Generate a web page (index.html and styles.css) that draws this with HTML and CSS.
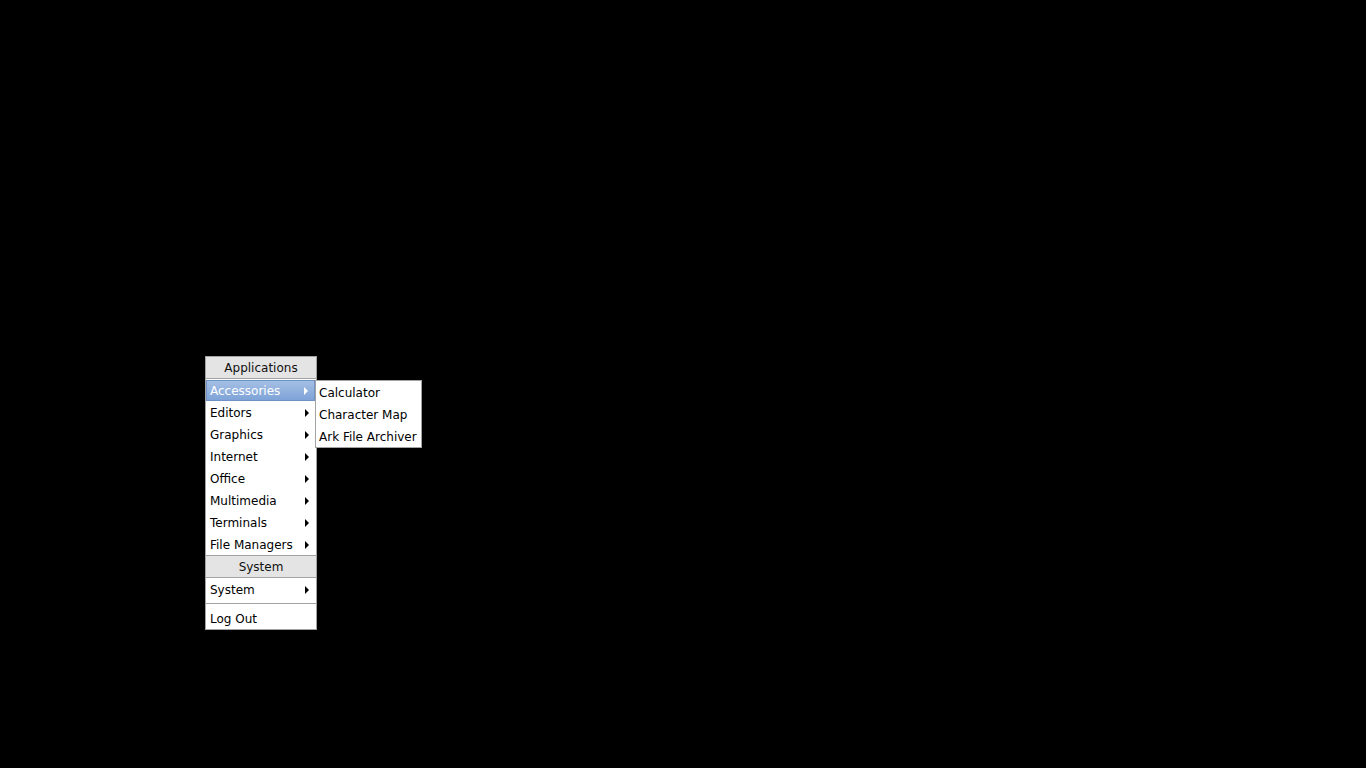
FILE: index.html
```html
<!DOCTYPE html>
<html>
<head>
<meta charset="utf-8">
<link rel="stylesheet" href="styles.css">
</head>
<body>
<div class="desktop">
  <div class="menu main-menu">
    <div class="header">Applications</div>
    <div class="item active"><span>Accessories</span><i class="arrow"></i></div>
    <div class="item"><span>Editors</span><i class="arrow"></i></div>
    <div class="item"><span>Graphics</span><i class="arrow"></i></div>
    <div class="item"><span>Internet</span><i class="arrow"></i></div>
    <div class="item"><span>Office</span><i class="arrow"></i></div>
    <div class="item"><span>Multimedia</span><i class="arrow"></i></div>
    <div class="item"><span>Terminals</span><i class="arrow"></i></div>
    <div class="item"><span>File Managers</span><i class="arrow"></i></div>
    <div class="header header-mid">System</div>
    <div class="item"><span>System</span><i class="arrow"></i></div>
    <div class="sep"></div>
    <div class="item"><span>Log Out</span></div>
  </div>
  <div class="menu sub-menu">
    <div class="item sub"><span>Calculator</span></div>
    <div class="item sub"><span>Character Map</span></div>
    <div class="item sub"><span>Ark File Archiver</span></div>
  </div>
</div>
</body>
</html>
```
FILE: styles.css
```css
html, body {
  margin: 0;
  padding: 0;
  background: #000;
}
.desktop {
  position: relative;
  width: 1366px;
  height: 768px;
  background: #000;
  font-family: "DejaVu Sans", sans-serif;
  font-size: 12px;
  color: #000;
}
.menu {
  position: absolute;
  background: #fff;
  border: 1px solid #a3a3a3;
  box-sizing: border-box;
}
.main-menu {
  left: 205px;
  top: 356px;
  width: 112px;
  height: 274px;
}
.sub-menu {
  left: 315px;
  top: 380px;
  width: 107px;
  height: 68px;
  padding-top: 1px;
}
.header {
  height: 21px;
  line-height: 21px;
  padding-top: 1px;
  box-sizing: border-box;
  background: #e4e4e4;
  border-bottom: 1px solid #a3a3a3;
  text-align: center;
  color: #111;
}
.header:first-child {
  height: 22px;
}
.header-mid {
  border-top: 1px solid #a3a3a3;
  height: 23px;
}
.item {
  display: flex;
  align-items: center;
  justify-content: space-between;
  height: 22px;
  line-height: 20px;
  padding: 2px 7px 0 4px;
  box-sizing: border-box;
  white-space: nowrap;
}
.item.sub {
  padding: 0 6px 0 3px;
  line-height: 22px;
}
.item.active {
  background: linear-gradient(#a4bfe4, #7fa3d8);
  border: 1px solid #6f91c6;
  margin: 1px 1px 0 0;
  height: 21px;
  line-height: 22px;
  padding: 0 6px 0 3px;
  color: #fff;
}
.arrow {
  display: block;
  width: 0;
  height: 0;
  margin-left: 4px;
  border-top: 4px solid transparent;
  border-bottom: 4px solid transparent;
  border-left: 4px solid #000;
}
.item.active .arrow {
  border-left-color: #fff;
}
.sep {
  height: 1px;
  background: #a3a3a3;
  margin: 3px 0 3px 0;
}
```
